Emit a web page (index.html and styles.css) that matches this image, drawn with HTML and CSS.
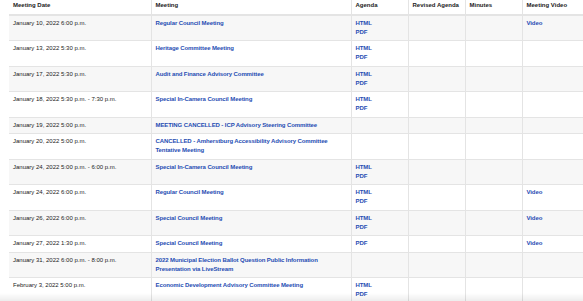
FILE: index.html
```html
<!DOCTYPE html>
<html lang="en">
<head>
    <meta charset="UTF-8">
    <meta name="viewport" content="width=device-width, initial-scale=1.0">
    <title>Council Meetings</title>
    <link rel="stylesheet" href="styles.css">
</head>
<body>
<div class="meetings">
    <table class="meeting-table">
        <colgroup>
            <col class="col-date">
            <col class="col-meeting">
            <col class="col-small">
            <col class="col-small">
            <col class="col-small">
            <col class="col-video">
        </colgroup>
        <thead>
            <tr>
                <th>Meeting Date</th>
                <th>Meeting</th>
                <th>Agenda</th>
                <th>Revised Agenda</th>
                <th>Minutes</th>
                <th>Meeting Video</th>
            </tr>
        </thead>
        <tbody>
            <tr>
                <td>January 10, 2022 6:00 p.m.</td>
                <td><a href="#">Regular Council Meeting</a></td>
                <td><a href="#">HTML</a><br><a href="#">PDF</a></td>
                <td></td>
                <td></td>
                <td><a href="#">Video</a></td>
            </tr>
            <tr>
                <td>January 13, 2022 5:30 p.m.</td>
                <td><a href="#">Heritage Committee Meeting</a></td>
                <td><a href="#">HTML</a><br><a href="#">PDF</a></td>
                <td></td>
                <td></td>
                <td></td>
            </tr>
            <tr>
                <td>January 17, 2022 5:30 p.m.</td>
                <td><a href="#">Audit and Finance Advisory Committee</a></td>
                <td><a href="#">HTML</a><br><a href="#">PDF</a></td>
                <td></td>
                <td></td>
                <td></td>
            </tr>
            <tr>
                <td>January 18, 2022 5:30 p.m. - 7:30 p.m.</td>
                <td><a href="#">Special In-Camera Council Meeting</a></td>
                <td><a href="#">HTML</a><br><a href="#">PDF</a></td>
                <td></td>
                <td></td>
                <td></td>
            </tr>
            <tr>
                <td>January 19, 2022 5:00 p.m.</td>
                <td><a href="#">MEETING CANCELLED - ICP Advisory Steering Committee</a></td>
                <td></td>
                <td></td>
                <td></td>
                <td></td>
            </tr>
            <tr>
                <td>January 20, 2022 5:00 p.m.</td>
                <td><a href="#">CANCELLED - Amherstburg Accessibility Advisory Committee Tentative Meeting</a></td>
                <td></td>
                <td></td>
                <td></td>
                <td></td>
            </tr>
            <tr>
                <td>January 24, 2022 5:00 p.m. - 6:00 p.m.</td>
                <td><a href="#">Special In-Camera Council Meeting</a></td>
                <td><a href="#">HTML</a><br><a href="#">PDF</a></td>
                <td></td>
                <td></td>
                <td></td>
            </tr>
            <tr>
                <td>January 24, 2022 6:00 p.m.</td>
                <td><a href="#">Regular Council Meeting</a></td>
                <td><a href="#">HTML</a><br><a href="#">PDF</a></td>
                <td></td>
                <td></td>
                <td><a href="#">Video</a></td>
            </tr>
            <tr>
                <td>January 26, 2022 6:00 p.m.</td>
                <td><a href="#">Special Council Meeting</a></td>
                <td><a href="#">HTML</a><br><a href="#">PDF</a></td>
                <td></td>
                <td></td>
                <td><a href="#">Video</a></td>
            </tr>
            <tr>
                <td>January 27, 2022 1:30 p.m.</td>
                <td><a href="#">Special Council Meeting</a></td>
                <td><a href="#">PDF</a></td>
                <td></td>
                <td></td>
                <td><a href="#">Video</a></td>
            </tr>
            <tr>
                <td>January 31, 2022 6:00 p.m. - 8:00 p.m.</td>
                <td><a href="#">2022 Municipal Election Ballot Question Public Information Presentation via LiveStream</a></td>
                <td></td>
                <td></td>
                <td></td>
                <td></td>
            </tr>
            <tr>
                <td>February 3, 2022 5:00 p.m.</td>
                <td><a href="#">Economic Development Advisory Committee Meeting</a></td>
                <td><a href="#">HTML</a><br><a href="#">PDF</a></td>
                <td></td>
                <td></td>
                <td></td>
            </tr>
        </tbody>
    </table>
</div>
<div class="bottom-fade"></div>
</body>
</html>
```

FILE: styles.css
```css
:root {
    --text: #222222;
    --link: #1f4db3;
    --border: #e4e4e4;
    --stripe: #f7f7f7;
}

html, body {
    margin: 0;
    padding: 0;
    overflow: hidden;
    background: #fff;
}

body {
    font-family: "Liberation Sans", Arial, sans-serif;
    font-size: 6px;
    line-height: 9px;
    color: var(--text);
}

.meetings {
    padding-left: 9px;
}

.meeting-table {
    table-layout: fixed;
    border-collapse: collapse;
    width: 600px;
}

.col-date { width: 142px; }
.col-meeting { width: 200px; }
.col-small { width: 57px; }
.col-video { width: 87px; }

.meeting-table th,
.meeting-table td {
    text-align: left;
    vertical-align: top;
    padding: 3px 4px 3.5px;
    border-left: 1px solid var(--border);
    border-bottom: 1px solid var(--border);
}

.meeting-table th:first-child,
.meeting-table td:first-child {
    border-left: none;
}

.meeting-table th {
    font-weight: bold;
    padding-top: 1px;
    padding-bottom: 3.5px;
    border-bottom: 2px solid var(--border);
}

.meeting-table tbody tr:nth-child(odd) td {
    background: var(--stripe);
}

.meeting-table a {
    color: var(--link);
    font-weight: bold;
    letter-spacing: -0.1px;
    text-decoration: none;
}

.bottom-fade {
    position: fixed;
    left: 0;
    right: 0;
    bottom: 0;
    height: 8px;
    background: linear-gradient(rgba(0, 0, 0, 0), rgba(0, 0, 0, 0.07));
    pointer-events: none;
}
```
